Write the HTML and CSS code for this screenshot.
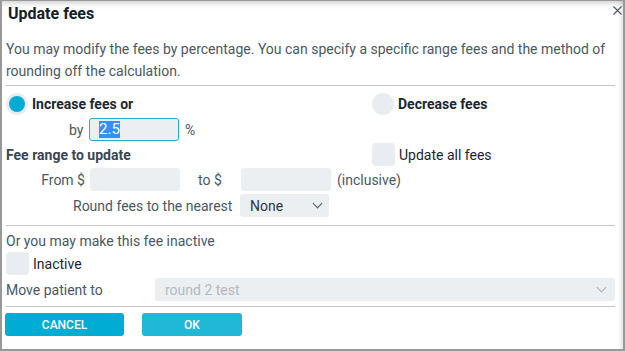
FILE: index.html
```html
<!DOCTYPE html>
<html lang="en">
<head>
  <meta charset="UTF-8">
  <title>Update fees</title>
  <link rel="stylesheet" href="styles.css">
</head>
<body>
  <div class="dialog">
    <div class="dialog-header">
      <h2>Update fees</h2>
      <svg class="close" width="9" height="9" viewBox="0 0 9 9">
        <path d="M0.5 0.5 L8.5 8.5 M8.5 0.5 L0.5 8.5" stroke="#4e5965" stroke-width="1.1" fill="none"/>
      </svg>
    </div>

    <p class="desc">You may modify the fees by percentage. You can specify a specific range fees and the method of rounding off the calculation.</p>
    <div class="rule"></div>

    <!-- increase / decrease -->
    <div class="row r-radio">
      <div class="col-left">
        <span class="radio checked"></span>
        <span class="label-bold">Increase fees or</span>
      </div>
      <div class="col-right">
        <span class="radio"></span>
        <span class="label-bold">Decrease fees</span>
      </div>
    </div>

    <div class="row r-by">
      <span class="lbl by-lbl">by</span>
      <div class="input focus"><span class="sel">2.5</span></div>
      <span class="lbl pct">%</span>
    </div>

    <div class="row r-range">
      <div class="col-left">
        <span class="label-bold">Fee range to update</span>
      </div>
      <div class="col-right">
        <span class="check"></span>
        <span class="label-dark">Update all fees</span>
      </div>
    </div>

    <div class="row r-from">
      <span class="lbl from-lbl">From $</span>
      <div class="input"></div>
      <span class="lbl to-lbl">to $</span>
      <div class="input"></div>
      <span class="lbl incl">(inclusive)</span>
    </div>

    <div class="row r-round">
      <span class="lbl round-lbl">Round fees to the nearest</span>
      <div class="select"><span>None</span><span class="chev"></span></div>
    </div>

    <div class="rule rule-2"></div>

    <p class="or-text">Or you may make this fee inactive</p>
    <div class="row r-inactive">
      <span class="check"></span>
      <span class="label-dark">Inactive</span>
    </div>

    <div class="row r-move">
      <span class="lbl move-lbl">Move patient to</span>
      <div class="select wide disabled"><span>round 2 test</span><span class="chev"></span></div>
    </div>

    <div class="rule rule-3"></div>

    <div class="buttons">
      <button class="btn btn-cancel">CANCEL</button>
      <button class="btn btn-ok">OK</button>
    </div>
  </div>
</body>
</html>
```

FILE: styles.css
```css
body {
  margin: 0;
  font-family: Roboto, "Liberation Sans", sans-serif;
  background-color: white;
}
.dialog {
  width: 625px;
  height: 351px;
  box-sizing: border-box;
  border: 1px solid #999;
  border-left-width: 2px;
  border-right-width: 2px;
  border-bottom-width: 2px;
  box-shadow: inset 0 7px 7px -6px rgba(0, 0, 0, 0.25), inset -8px 0 6px -7px rgba(0, 0, 0, 0.15);
  padding: 0 8px 0 4px;
  color: #1c2733;
}
.dialog-header {
  display: flex;
  justify-content: space-between;
  height: 28px;
}
.dialog-header h2 {
  margin: 0;
  padding: 3px 0 0 2px;
  font-size: 16px;
  font-weight: bold;
  color: #14202c;
}
.close {
  margin: 5px -7px 0 0;
}

.desc {
  margin: 9px 0 0 0;
  font-size: 14px;
  line-height: 22px;
  color: #4a5866;
}
.rule {
  height: 1px;
  background-color: #c6c6c6;
  margin: 3px 0 0 0;
}

.row {
  display: flex;
  align-items: center;
  height: 23px;
  font-size: 14px;
}
.col-left {
  display: flex;
  align-items: center;
  width: 366px;
}
.col-right {
  display: flex;
  align-items: center;
}
.r-radio { margin-top: 6px; }
.r-by { margin-top: 3px; }
.r-range { margin-top: 2px; }
.r-from { margin-top: 2px; }
.r-round { margin-top: 3px; }

.radio {
  width: 22px;
  height: 22px;
  border-radius: 50%;
  background-color: #e9edf1;
  margin: 0 4px 0 0;
  position: relative;
}
.radio.checked::after {
  content: "";
  position: absolute;
  left: 3px;
  top: 3px;
  width: 16px;
  height: 16px;
  border-radius: 50%;
  background-color: #00acd3;
}
.check {
  width: 23px;
  height: 23px;
  border-radius: 4px;
  background-color: #e9edf1;
  margin: 0 4px 0 0;
}
.label-bold {
  font-weight: bold;
  color: #1c2733;
}
.r-range .col-left .label-bold {
  color: #3a4652;
}
.label-dark {
  color: #1c2733;
}
.lbl {
  color: #4a5866;
}

.input {
  width: 90px;
  height: 23px;
  box-sizing: border-box;
  border-radius: 3px;
  background-color: #eceff2;
  display: flex;
  align-items: center;
  padding-left: 10px;
}
.input.focus {
  border: 1px solid #1fb0d0;
  padding-left: 9px;
}
.sel {
  background-color: #3390ff;
  color: white;
  line-height: 17px;
  font-size: 15px;
}

.by-lbl { margin-left: 63px; width: 20px; }
.pct { margin-left: 6px; }

.from-lbl { width: 79px; text-align: right; margin-right: 5px; }
.to-lbl { margin-left: 18px; width: 43px; }
.incl { margin-left: 6px; }

.round-lbl { margin-left: 67px; width: 167px; }

.select {
  width: 89px;
  height: 23px;
  box-sizing: border-box;
  border-radius: 3px;
  background-color: #eceff2;
  display: flex;
  align-items: center;
  justify-content: space-between;
  padding: 0 8px 0 10px;
  color: #2c3843;
}
.chev {
  width: 6px;
  height: 6px;
  border-right: 1.5px solid #4a5866;
  border-bottom: 1.5px solid #4a5866;
  transform: rotate(45deg);
  margin-top: -4px;
}
.select.wide {
  width: 460px;
  padding-right: 10px;
}
.select.disabled {
  color: #b3b9bf;
}
.select.disabled .chev {
  border-color: #aab2bb;
}
.move-lbl { width: 149px; }

.rule-2 { margin-top: 8px; }
.or-text {
  margin: 6px 0 0 0;
  font-size: 14px;
  line-height: 18px;
  color: #4a5866;
}
.r-inactive { margin-top: 2px; }
.r-move { margin-top: 3px; }
.rule-3 { margin-top: 5px; }

.buttons {
  display: flex;
  gap: 18px;
  margin-top: 6px;
}
.btn {
  height: 23px;
  border: none;
  border-radius: 3px;
  color: white;
  font-family: Roboto, "Liberation Sans", sans-serif;
  font-size: 12px;
  font-weight: 500;
  padding: 0;
}
.btn-cancel {
  width: 119px;
  margin-left: -1px;
  background-color: #00acd3;
}
.btn-ok {
  width: 100px;
  background-color: #21b8d7;
}
```
